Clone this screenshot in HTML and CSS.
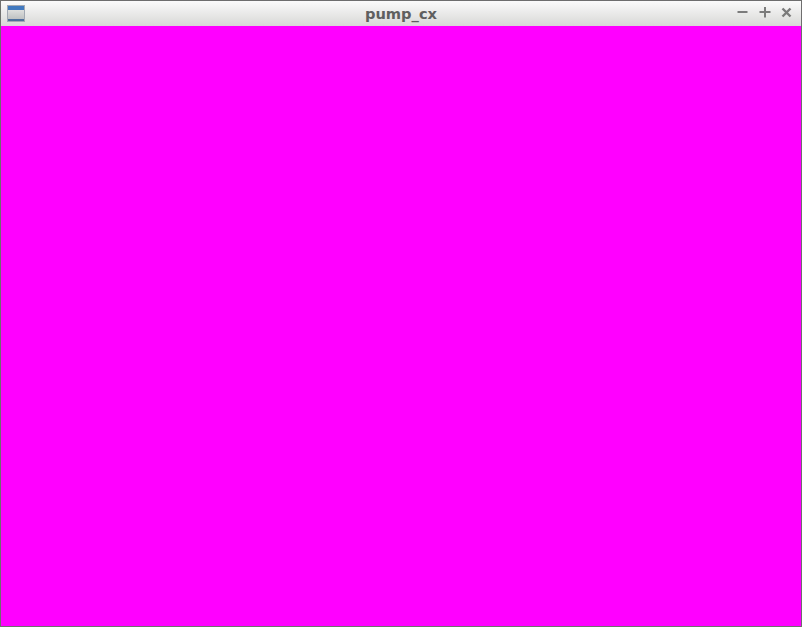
FILE: index.html
```html
<!DOCTYPE html>
<html lang="en">
<head>
<meta charset="utf-8">
<title>pump_cx</title>
<link rel="stylesheet" href="styles.css">
</head>
<body>
<div class="window">
  <header class="titlebar">
    <svg class="app-icon" width="18" height="17" viewBox="0 0 18 17">
      <defs>
        <linearGradient id="pane" x1="0" y1="0" x2="0" y2="1">
          <stop offset="0" stop-color="#dedfde"/>
          <stop offset="1" stop-color="#bfc1c2"/>
        </linearGradient>
      </defs>
      <rect x="0.5" y="0.5" width="17" height="16" fill="#c9cbcb" stroke="#a3a9b3"/>
      <rect x="1" y="1" width="16" height="4" fill="#4179bf"/>
      <rect x="1" y="5" width="16" height="9" fill="url(#pane)"/>
      <rect x="1" y="14" width="16" height="2" fill="#4d6f9c"/>
    </svg>
    <h1 class="title">pump_cx</h1>
    <div class="controls">
      <svg width="12" height="12" viewBox="0 0 12 12"><path d="M0.5 5h10" stroke="#7b7b7b" stroke-width="2"/></svg>
      <svg width="12" height="12" viewBox="0 0 12 12"><path d="M0.5 5h11M6 -0.5v11" stroke="#7b7b7b" stroke-width="2"/></svg>
      <svg width="12" height="12" viewBox="0 0 12 12"><path d="M1.5 1.5l8 8M9.5 1.5l-8 8" stroke="#7b7b7b" stroke-width="2.4"/></svg>
    </div>
  </header>
  <main class="canvas"></main>
</div>
</body>
</html>
```
FILE: styles.css
```css
html, body {
  margin: 0;
  padding: 0;
  height: 100%;
  overflow: hidden;
}
.window {
  box-sizing: border-box;
  width: 802px;
  height: 627px;
  display: flex;
  flex-direction: column;
  border: 1px solid #6e6e6e;
  border-top: 0;
}
.titlebar {
  position: relative;
  height: 26px;
  flex: none;
  display: flex;
  align-items: center;
  justify-content: space-between;
  padding: 0 8px 1px 6px;
  background: linear-gradient(#fbfbfb, #d8d8d6);
  border-top: 1px solid #6e6e6e;
  box-sizing: border-box;
}
.app-icon { display: block; }
.title {
  position: absolute;
  left: 0;
  right: 0;
  top: 4px;
  margin: 0;
  text-align: center;
  font: bold 11pt/17px "DejaVu Sans", sans-serif;
  color: #5f5f5f;
}
.controls {
  display: flex;
  gap: 10px;
}
.controls svg { display: block; }
.canvas {
  flex: 1;
  background: #ff00ff;
}
```
